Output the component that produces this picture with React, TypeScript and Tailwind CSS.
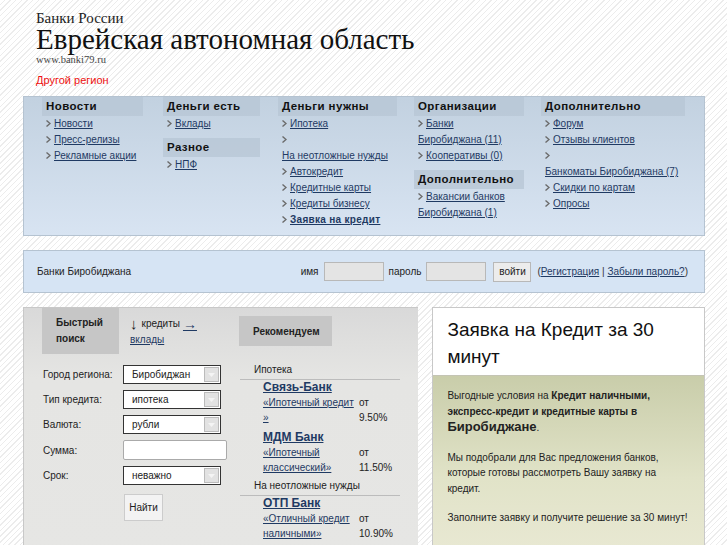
import React from "react"

const Bullet = () => (
  <svg width="5" height="7" viewBox="0 0 5 7" className="inline-block mr-[3px] align-[0px]">
    <path d="M0.5 0.5 L4 3.5 L0.5 6.5" fill="none" stroke="#6b6b6b" strokeWidth="1.4" />
  </svg>
)

const Head = ({ children }: { children: React.ReactNode }) => (
  <div className="h-[19px] bg-[#b8c7d6]/80 pl-[4px] leading-[19px] font-bold text-[11.5px] tracking-[0.4px] text-[#111]">{children}</div>
)

const Item = ({ children, bold }: { children: React.ReactNode; bold?: boolean }) => (
  <div className="pl-[4px] leading-[16px]">
    <Bullet />
    <a href="#" className={`text-[#1f3a63] underline ${bold ? "font-bold tracking-[0.3px]" : ""}`}>
      {children}
    </a>
  </div>
)

const Select = ({ value }: { value: string }) => (
  <div className="flex h-[19px] w-[98px] items-center border border-[#333] bg-white pl-[8px] pr-[1px]">
    <span className="flex-1">{value}</span>
    <span className="flex h-[15px] w-[15px] items-center justify-center border border-[#bbb] bg-[#e2e2e2]">
      <svg width="7" height="4" viewBox="0 0 7 4">
        <path d="M0 0 L7 0 L3.5 4 Z" fill="#f4f4f4" />
      </svg>
    </span>
  </div>
)

const Offer = ({ bank, line1, line2, rate, first }: { bank: string; line1: string; line2: string; rate: string; first?: boolean }) => (
  <div className={`pl-[23px] ${first ? "pt-0" : "pt-[5px]"}`}>
    <a href="#" className="block font-bold text-[12px] leading-[15px] text-[#1f3a63] underline">{bank}</a>
    <div className="flex leading-[15px]">
      <div className="w-[96px] whitespace-nowrap">
        <a href="#" className="text-[#1f3a63] underline">{line1}</a>
        <br />
        <a href="#" className="text-[#1f3a63] underline">{line2}</a>
      </div>
      <div>
        от
        <br />
        {rate}
      </div>
    </div>
  </div>
)

export default function App() {
  return (
    <div
      className="min-h-[545px] w-full overflow-hidden bg-[repeating-linear-gradient(135deg,#ffffff_0px,#ffffff_3px,#ececec_3px,#ececec_4px)] text-[10px] text-[#222]"
      style={{ fontFamily: '"Liberation Sans", Arial, sans-serif' }}
    >
      <div className="ml-[23px] w-[682px]">
        {/* header */}
        <div className="pl-[13px] pt-[10px] h-[96px]">
          <div className="font-['Liberation_Serif',serif] text-[15px] leading-[16px] text-[#222]">Банки России</div>
          <div className="font-['Liberation_Serif',serif] text-[29px] leading-[28px] text-[#111] -mt-[1px]">
            Еврейская автономная область
          </div>
          <div className="font-['Liberation_Serif',serif] text-[10.5px] leading-[12px] text-[#444] mt-[1px]">www.banki79.ru</div>
          <a href="#" className="block mt-[8px] text-[11px] leading-[13px] text-[#ee1111]">Другой регион</a>
        </div>

        {/* menu */}
        <div className="h-[140px] border border-[#b5c3d1] bg-gradient-to-b from-[#c2d1e0] to-[#d8e4f2] pl-[18px] flex">
          <div className="w-[121px]">
            <div className="w-[101px]"><Head>Новости</Head></div>
            <Item>Новости</Item>
            <Item>Пресс-релизы</Item>
            <Item>Рекламные акции</Item>
          </div>
          <div className="w-[115px]">
            <div className="w-[97px]"><Head>Деньги есть</Head></div>
            <Item>Вклады</Item>
            <div className="mt-[6px] w-[97px]"><Head>Разное</Head></div>
            <Item>НПФ</Item>
          </div>
          <div className="w-[136px]">
            <div className="w-[119px]"><Head>Деньги нужны</Head></div>
            <Item>Ипотека</Item>
            <div className="pl-[4px] leading-[16px]">
              <Bullet />
              <br />
              <a href="#" className="text-[#1f3a63] underline whitespace-nowrap">На неотложные нужды</a>
            </div>
            <Item>Автокредит</Item>
            <Item>Кредитные карты</Item>
            <Item>Кредиты бизнесу</Item>
            <Item bold>Заявка на кредит</Item>
          </div>
          <div className="w-[127px]">
            <div className="w-[110px]"><Head>Организации</Head></div>
            <Item>Банки<br />Биробиджана (11)</Item>
            <Item>Кооперативы (0)</Item>
            <div className="mt-[6px] w-[110px]"><Head>Дополнительно</Head></div>
            <Item>Вакансии банков<br />Биробиджана (1)</Item>
          </div>
          <div className="w-[144px]">
            <Head>Дополнительно</Head>
            <Item>Форум</Item>
            <Item>Отзывы клиентов</Item>
            <div className="pl-[4px] leading-[16px]">
              <Bullet />
              <br />
              <a href="#" className="text-[#1f3a63] underline whitespace-nowrap">Банкоматы Биробиджана (7)</a>
            </div>
            <Item>Скидки по картам</Item>
            <Item>Опросы</Item>
          </div>
        </div>

        {/* login bar */}
        <div className="mt-[14px] h-[43px] border border-[#b5c3d1] bg-[#d6e4f4] flex items-center pl-[13px]">
          <span className="flex-1">Банки Биробиджана</span>
          <span className="mr-[5px]">имя</span>
          <span className="h-[19px] w-[60px] border border-[#b8b8b8] bg-[#e4e4e4]" />
          <span className="ml-[5px] mr-[5px]">пароль</span>
          <span className="h-[19px] w-[60px] border border-[#b8b8b8] bg-[#e4e4e4]" />
          <span className="ml-[7px] flex h-[20px] w-[38px] items-center justify-center border border-[#b8b8b8] bg-[#ececec]">войти</span>
          <span className="ml-[6px] mr-[16px] text-[#333]">
            (<a href="#" className="text-[#1f3a63] underline">Регистрация</a> | <a href="#" className="text-[#1f3a63] underline">Забыли пароль?</a>)
          </span>
        </div>

        {/* lower panels */}
        <div className="mt-[14px] flex">
          <div className="w-[396px] h-[240px] border-t border-l border-[#c8c8c8] bg-gradient-to-b from-[#d9d9d9] from-[0px] via-[#e5e5e3] via-[70px] to-[#e6e6e4]">
            <div className="flex pl-[18px] h-[55px]">
              <div className="w-[77px] h-[46px] bg-[#c6c6c6] pl-[14px] pt-[7px] font-bold leading-[16px]">
                Быстрый<br />поиск
              </div>
              <div className="w-[120px] pl-[11px] pt-[8px] leading-[16px]">
                <div className="flex items-center">
                  <span className="text-[15px] font-bold leading-[14px] mr-[4px]">↓</span>
                  <span>кредиты</span>
                  <a href="#" className="ml-[3px] text-[#1f3a63] font-bold text-[14px] leading-[12px] underline">→</a>
                </div>
                <a href="#" className="text-[#1f3a63] underline">вклады</a>
              </div>
              <div className="mt-[8px] w-[93px] h-[30px] bg-[#c6c6c6] flex items-center pl-[14px] font-bold text-[10px]">Рекомендуем</div>
            </div>
            <div className="flex">
              <div className="w-[216px] pl-[19px] pt-[2px]">
                <div className="grid grid-cols-[80px_1fr] gap-y-[6px] items-center">
                  <span>Город региона:</span>
                  <Select value="Биробиджан" />
                  <span>Тип кредита:</span>
                  <Select value="ипотека" />
                  <span>Валюта:</span>
                  <Select value="рубли" />
                  <span>Сумма:</span>
                  <span className="h-[20px] w-[104px] rounded-[2px] border border-[#aaa] bg-white" />
                  <span>Срок:</span>
                  <Select value="неважно" />
                  <span />
                  <span className="mt-[3px] ml-[1px] flex h-[27px] w-[39px] items-center justify-center border border-[#ccc] bg-[#f3f3f3]">Найти</span>
                </div>
              </div>
              <div className="w-[160px]">
                <div className="pl-[14px] leading-[14px] border-b border-[#bcbcbc] pb-[2px]">Ипотека</div>
                <Offer first bank="Связь-Банк" line1="«Ипотечный кредит" line2="»" rate="9.50%" />
                <Offer bank="МДМ Банк" line1="«Ипотечный" line2="классический»" rate="11.50%" />
                <div className="pl-[14px] leading-[14px] mt-[4px] border-b border-[#bcbcbc] pb-[2px]">На неотложные нужды</div>
                <Offer first bank="ОТП Банк" line1="«Отличный кредит" line2="наличными»" rate="10.90%" />
              </div>
            </div>
          </div>

          <div className="ml-[14px] w-[273px] h-[240px] border-t border-x border-[#c8c8c8] flex flex-col">
            <div className="bg-white h-[68px] pl-[14px] pt-[8px] border-b border-[#c4c4b4] text-[19px] leading-[27px] text-[#111]">
              Заявка на Кредит за 30<br />минут
            </div>
            <div className="flex-1 bg-gradient-to-b from-[#c9cdaa] via-[#e1e3c8] via-[60%] to-[#e8e8d2] pl-[14px] pr-[6px] pt-[12px] leading-[15.5px] text-[10px] text-[#222] whitespace-nowrap">
              <p>
                Выгодные условия на <b>Кредит наличными,</b>
                <br />
                <b>экспресс-кредит и кредитные карты в</b>
                <br />
                <b className="text-[13px]">Биробиджане</b>.
              </p>
              <p className="mt-[14px]">
                Мы подобрали для Вас предложения банков,
                <br />
                которые готовы рассмотреть Вашу заявку на
                <br />
                кредит.
              </p>
              <p className="mt-[14px]">Заполните заявку и получите решение за 30 минут!</p>
            </div>
          </div>
        </div>
      </div>
    </div>
  )
}
